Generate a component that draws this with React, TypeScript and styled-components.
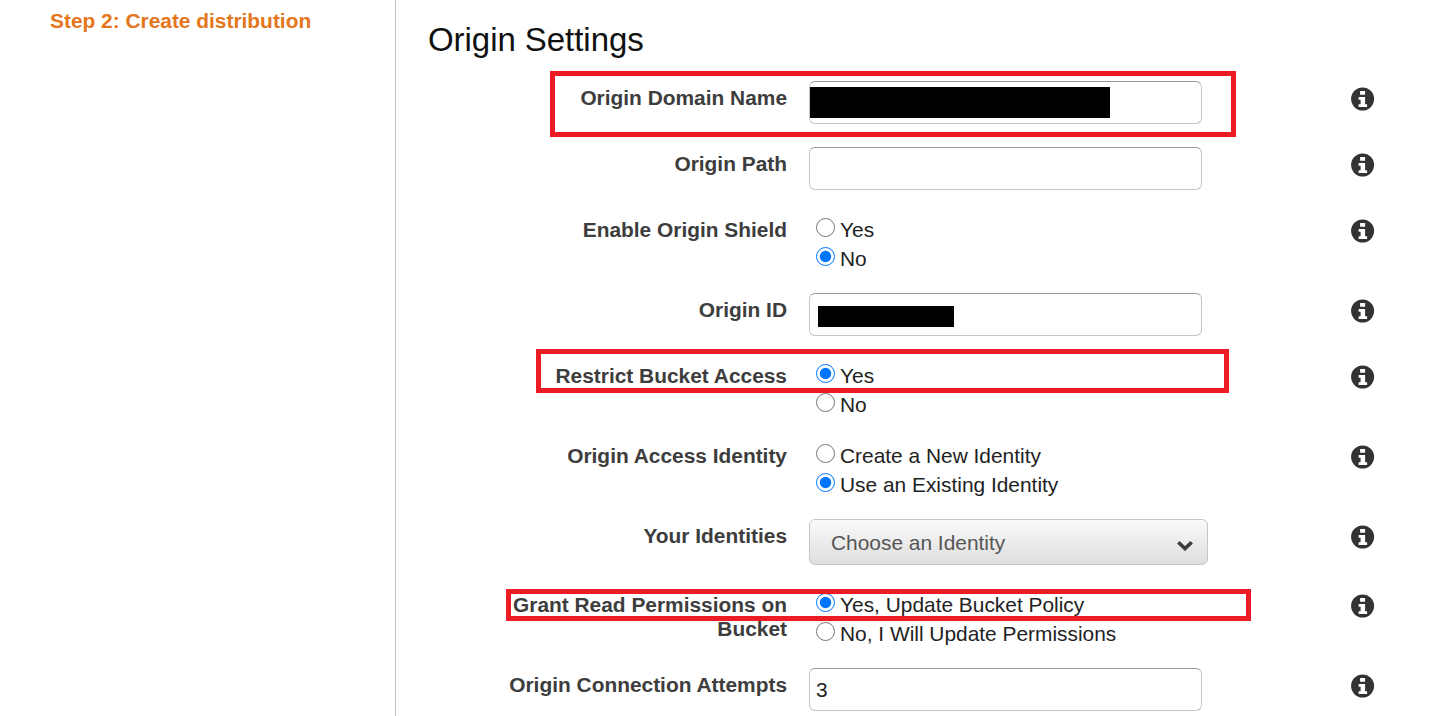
import React from "react";
import styled, { createGlobalStyle } from "styled-components";

const Global = createGlobalStyle`
  html, body { margin: 0; padding: 0; height: 716px; overflow: hidden; background: #fff; }
  body { font-family: "Liberation Sans", Arial, sans-serif; }
`;

const Page = styled.div`
  display: grid;
  grid-template-columns: 396px 1fr;
  height: 716px;
  position: relative;
  overflow: hidden;
`;

const Sidebar = styled.aside`
  border-right: 1px solid #c4c4c4;
  padding: 9px 0 0 50px;
`;

const StepTitle = styled.div`
  color: #e4761c;
  font-size: 20.9px;
  line-height: 24px;
  font-weight: 700;
`;

const Main = styled.main`
  padding: 19px 0 0 32px;
`;

const Heading = styled.h2`
  margin: 0;
  font-size: 33px;
  line-height: 42px;
  font-weight: 400;
  color: #111;
  letter-spacing: -0.05px;
`;

const Form = styled.div`
  display: flex;
  flex-direction: column;
  gap: 23px;
  margin: 20px 0 0 74px;
`;

const Row = styled.div`
  display: grid;
  grid-template-columns: 285px 520px 24px;
  column-gap: 22px;
`;

const Label = styled.div`
  padding-top: 5px;
  text-align: right;
  font-size: 20.9px;
  line-height: 24px;
  font-weight: 700;
  color: #3d3d3d;
`;

const TextField = styled.div`
  box-sizing: border-box;
  width: 393px;
  height: 43px;
  border: 1px solid #c6c6c6;
  border-top-color: #999;
  border-radius: 6px;
  padding: 9px 6px;
  font-size: 20.9px;
  line-height: 24px;
  color: #222;
  background: #fff;
`;

const RadioGroup = styled.div`
  display: flex;
  flex-direction: column;
  height: 57px;
  padding-left: 7px;
`;

const RadioLine = styled.label`
  display: flex;
  align-items: flex-start;
  height: 28.5px;
  font-size: 20.9px;
  line-height: 29px;
  color: #222;
  white-space: nowrap;
`;

const RadioText = styled.span`
  padding-top: 2px;
`;

const RadioInput = styled.input`
  width: 19px;
  height: 19px;
  margin: 5px 5px 0 0;
  flex: none;
`;

const SelectBox = styled.div`
  box-sizing: border-box;
  width: 399px;
  height: 46px;
  border: 1px solid #c6c6c6;
  border-radius: 6px;
  background: linear-gradient(#fafafa, #dedede);
  padding: 1px 14px 0 21px;
  display: flex;
  align-items: center;
  justify-content: space-between;
  font-size: 20.9px;
  color: #555;
`;

const Chevron = styled.svg`
  width: 16px;
  height: 11px;
  margin-top: 5px;
  fill: none;
  stroke: #3d3d3d;
  stroke-width: 3.6;
`;

const InfoSvg = styled.svg`
  display: block;
  margin-top: 6px;
  width: 24px;
  height: 24px;
  fill: #333;
`;

const Redaction = styled.div`
  position: absolute;
  background: #000;
`;

const Highlight = styled.div`
  position: absolute;
  box-sizing: border-box;
  border: 5px solid #ed1c24;
  pointer-events: none;
`;

function Info() {
  return (
    <InfoSvg viewBox="0.4 0 24 24">
      <path
        fillRule="evenodd"
        d="M12 .5a11.5 11.5 0 1 0 0 23 11.5 11.5 0 0 0 0-23ZM9.5 4h5v3.8h-5ZM8 10h6.5v7.2H16.5V20H8v-2.8h2V12.8H8Z"
      />
    </InfoSvg>
  );
}

function Radios({ name, options, checked }: { name: string; options: string[]; checked: number }) {
  return (
    <RadioGroup>
      {options.map((o, i) => (
        <RadioLine key={o}>
          <RadioInput type="radio" name={name} defaultChecked={i === checked} />
          <RadioText>{o}</RadioText>
        </RadioLine>
      ))}
    </RadioGroup>
  );
}

export default function App() {
  return (
    <Page>
      <Global />
      <Sidebar>
        <StepTitle>Step 2: Create distribution</StepTitle>
      </Sidebar>
      <Main>
        <Heading>Origin Settings</Heading>
        <Form>
          <Row>
            <Label>Origin Domain Name</Label>
            <TextField />
            <Info />
          </Row>
          <Row>
            <Label>Origin Path</Label>
            <TextField />
            <Info />
          </Row>
          <Row>
            <Label>Enable Origin Shield</Label>
            <Radios name="shield" options={["Yes", "No"]} checked={1} />
            <Info />
          </Row>
          <Row>
            <Label>Origin ID</Label>
            <TextField />
            <Info />
          </Row>
          <Row>
            <Label>Restrict Bucket Access</Label>
            <Radios name="restrict" options={["Yes", "No"]} checked={0} />
            <Info />
          </Row>
          <Row>
            <Label>Origin Access Identity</Label>
            <Radios name="oai" options={["Create a New Identity", "Use an Existing Identity"]} checked={1} />
            <Info />
          </Row>
          <Row>
            <Label>Your Identities</Label>
            <SelectBox>
              Choose an Identity
              <Chevron viewBox="0 0 16 11">
                <path d="M1.3 2.2 8 8.6l6.7-6.4" />
              </Chevron>
            </SelectBox>
            <Info />
          </Row>
          <Row>
            <Label>Grant Read Permissions on Bucket</Label>
            <Radios name="grant" options={["Yes, Update Bucket Policy", "No, I Will Update Permissions"]} checked={0} />
            <Info />
          </Row>
          <Row>
            <Label>Origin Connection Attempts</Label>
            <TextField>3</TextField>
            <Info />
          </Row>
        </Form>
      </Main>
      <Redaction style={{ left: 810, top: 87, width: 300, height: 31 }} />
      <Redaction style={{ left: 818, top: 306, width: 136, height: 21 }} />
      <Highlight style={{ left: 550, top: 71, width: 686, height: 66 }} />
      <Highlight style={{ left: 536, top: 349, width: 693, height: 44 }} />
      <Highlight style={{ left: 506, top: 589, width: 745, height: 32 }} />
    </Page>
  );
}
